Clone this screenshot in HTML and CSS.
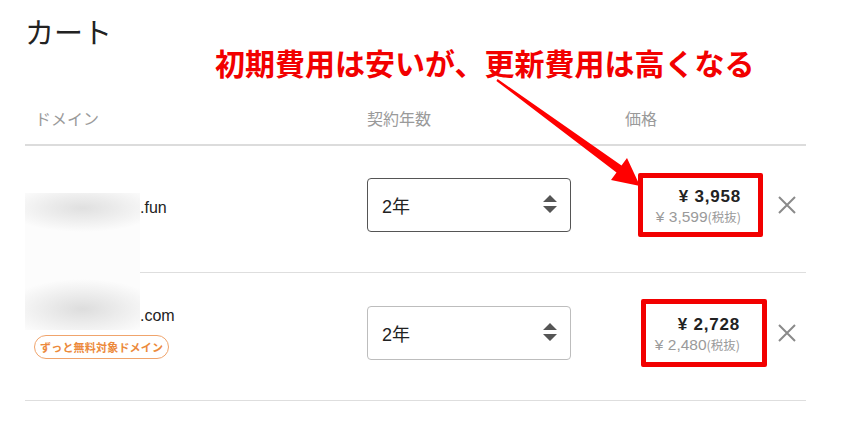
FILE: index.html
```html
<!DOCTYPE html>
<html lang="ja">
<head>
<meta charset="UTF-8" />
<meta name="viewport" content="width=device-width, initial-scale=1" />
<title>カート</title>
<link rel="stylesheet" href="styles.css">
</head>
<body>
  <div class="cart">
    <h1>カート</h1>

    <div class="cart-head">
      <div class="col-domain">ドメイン</div>
      <div>契約年数</div>
      <div>価格</div>
      <div></div>
    </div>

    <div class="cart-row row-first">
      <div class="domain">
        <span class="redact redact-1"></span>
        <div class="domain-name"><span class="name-hidden"></span>.fun</div>
      </div>
      <div class="term">
        <div class="select active">
          <span>2年</span>
          <svg class="updown" width="14" height="18" viewBox="0 0 14 18"><path d="M7 0 L14 7 H0 Z M0 11 H14 L7 18 Z" fill="#555"/></svg>
        </div>
      </div>
      <div class="price">
        <div class="mark">
          <div class="price-main">¥ 3,958</div>
          <div class="price-sub">¥ 3,599<small>(税抜)</small></div>
        </div>
      </div>
      <div class="remove">
        <svg width="18" height="18" viewBox="0 0 18 18"><path d="M1 1 L17 17 M17 1 L1 17" stroke="#8a8a8a" stroke-width="2"/></svg>
      </div>
    </div>

    <div class="cart-row row-second">
      <div class="domain">
        <span class="redact redact-2"></span>
        <div class="domain-name"><span class="name-hidden"></span>.com</div>
        <span class="badge">ずっと無料対象ドメイン</span>
      </div>
      <div class="term">
        <div class="select">
          <span>2年</span>
          <svg class="updown" width="14" height="18" viewBox="0 0 14 18"><path d="M7 0 L14 7 H0 Z M0 11 H14 L7 18 Z" fill="#555"/></svg>
        </div>
      </div>
      <div class="price">
        <div class="mark mark-wide">
          <div class="price-main">¥ 2,728</div>
          <div class="price-sub">¥ 2,480<small>(税抜)</small></div>
        </div>
      </div>
      <div class="remove">
        <svg width="18" height="18" viewBox="0 0 18 18"><path d="M1 1 L17 17 M17 1 L1 17" stroke="#8a8a8a" stroke-width="2"/></svg>
      </div>
    </div>
  </div>

  <!-- annotation -->
  <div class="note">初期費用は安いが、更新費用は高くなる</div>
  <svg class="arrow" width="860" height="422" viewBox="0 0 860 422">
    <polygon points="497.6,79 621.5,165.5 627,158 640,186 611,180 616.5,172.5 496.4,81" fill="#f00"/>
  </svg>
</body>
</html>
```

FILE: styles.css
```css
body {
  margin: 0;
  background: #ffffff;
  font-family: "Liberation Sans", "Noto Sans CJK JP", sans-serif;
  color: #222;
}
.cart {
  width: 781px;
  padding: 14px 0 0 25px;
}
h1 {
  margin: 0;
  font-family: "Noto Sans CJK JP", sans-serif;
  font-weight: 400;
  font-size: 29px;
  line-height: 35px;
  color: #222;
}
.cart-head,
.cart-row {
  display: grid;
  grid-template-columns: 342px 258px 153px 28px;
}
.cart-head {
  margin-top: 57px;
  padding-bottom: 14px;
  border-bottom: 2px solid #dcdcdc;
  font-family: "Noto Sans CJK JP", sans-serif;
  font-size: 16px;
  line-height: 24px;
  color: #9a9a9a;
}
.cart-head .col-domain {
  padding-left: 10px;
}
.cart-row {
  align-items: center;
  border-bottom: 1px solid #dedede;
  padding-bottom: 8px;
  box-sizing: border-box;
}
.row-first {
  height: 127px;
}
.row-second {
  height: 128px;
}
.domain {
  position: relative;
  font-size: 16px;
}
.domain-name {
  display: flex;
  align-items: center;
  line-height: 20px;
}
.row-first .domain-name {
  margin-top: 6px;
}
.name-hidden {
  display: inline-block;
  width: 115px;
  height: 20px;
}
.redact {
  position: absolute;
  left: 0;
  width: 115px;
  z-index: 1;
}
.redact-1 {
  top: 1px;
  height: 80px;
  background: radial-gradient(ellipse 78px 24px at 50% 15px, #e0e0e0 0%, #ececec 45%, #fcfcfc 100%);
}
.redact-2 {
  top: -33px;
  height: 57px;
  background: radial-gradient(ellipse 78px 30px at 50% 36px, #dddddd 0%, #ebebeb 45%, #fcfcfc 100%);
}
.badge {
  display: inline-block;
  margin: 9px 0 0 9px;
  padding: 0 5px;
  height: 22px;
  line-height: 22px;
  border: 1px solid #f0a46c;
  border-radius: 12px;
  font-family: "Noto Sans CJK JP", sans-serif;
  font-size: 11px;
  font-weight: 700;
  color: #ec8a3c;
  letter-spacing: 0.2px;
}
.select {
  width: 204px;
  height: 54px;
  box-sizing: border-box;
  border: 1px solid #bdbdbd;
  border-radius: 4px;
  display: flex;
  align-items: center;
  justify-content: space-between;
  padding: 0 13px 0 14px;
  font-size: 18px;
}
.select.active {
  border-color: #555;
}
.select .updown {
  margin-top: -2px;
}
.price {
  padding-left: 13px;
}
.mark {
  width: 125px;
  height: 64px;
  box-sizing: border-box;
  border: 5px solid #f20000;
  border-radius: 2px;
  padding: 9px 17px 0 0;
  text-align: right;
}
.mark-wide {
  width: 126px;
  height: 68px;
  margin-left: 3px;
  padding: 11px 22px 0 0;
}
.price-main {
  font-size: 17px;
  font-weight: 700;
  line-height: 20px;
  letter-spacing: 0.8px;
}
.price-sub {
  font-size: 15.5px;
  line-height: 19px;
  color: #9a9a9a;
  white-space: nowrap;
}
.price-sub small {
  font-family: "Noto Sans CJK JP", sans-serif;
  font-size: 12.5px;
}
.remove {
  display: flex;
  align-items: center;
}
.note {
  position: absolute;
  left: 215px;
  top: 46px;
  font-family: "Noto Sans CJK JP", sans-serif;
  font-size: 30px;
  font-weight: 700;
  line-height: 32px;
  color: #f20000;
  white-space: nowrap;
}
.arrow {
  position: absolute;
  left: 0;
  top: 0;
  pointer-events: none;
}
```
